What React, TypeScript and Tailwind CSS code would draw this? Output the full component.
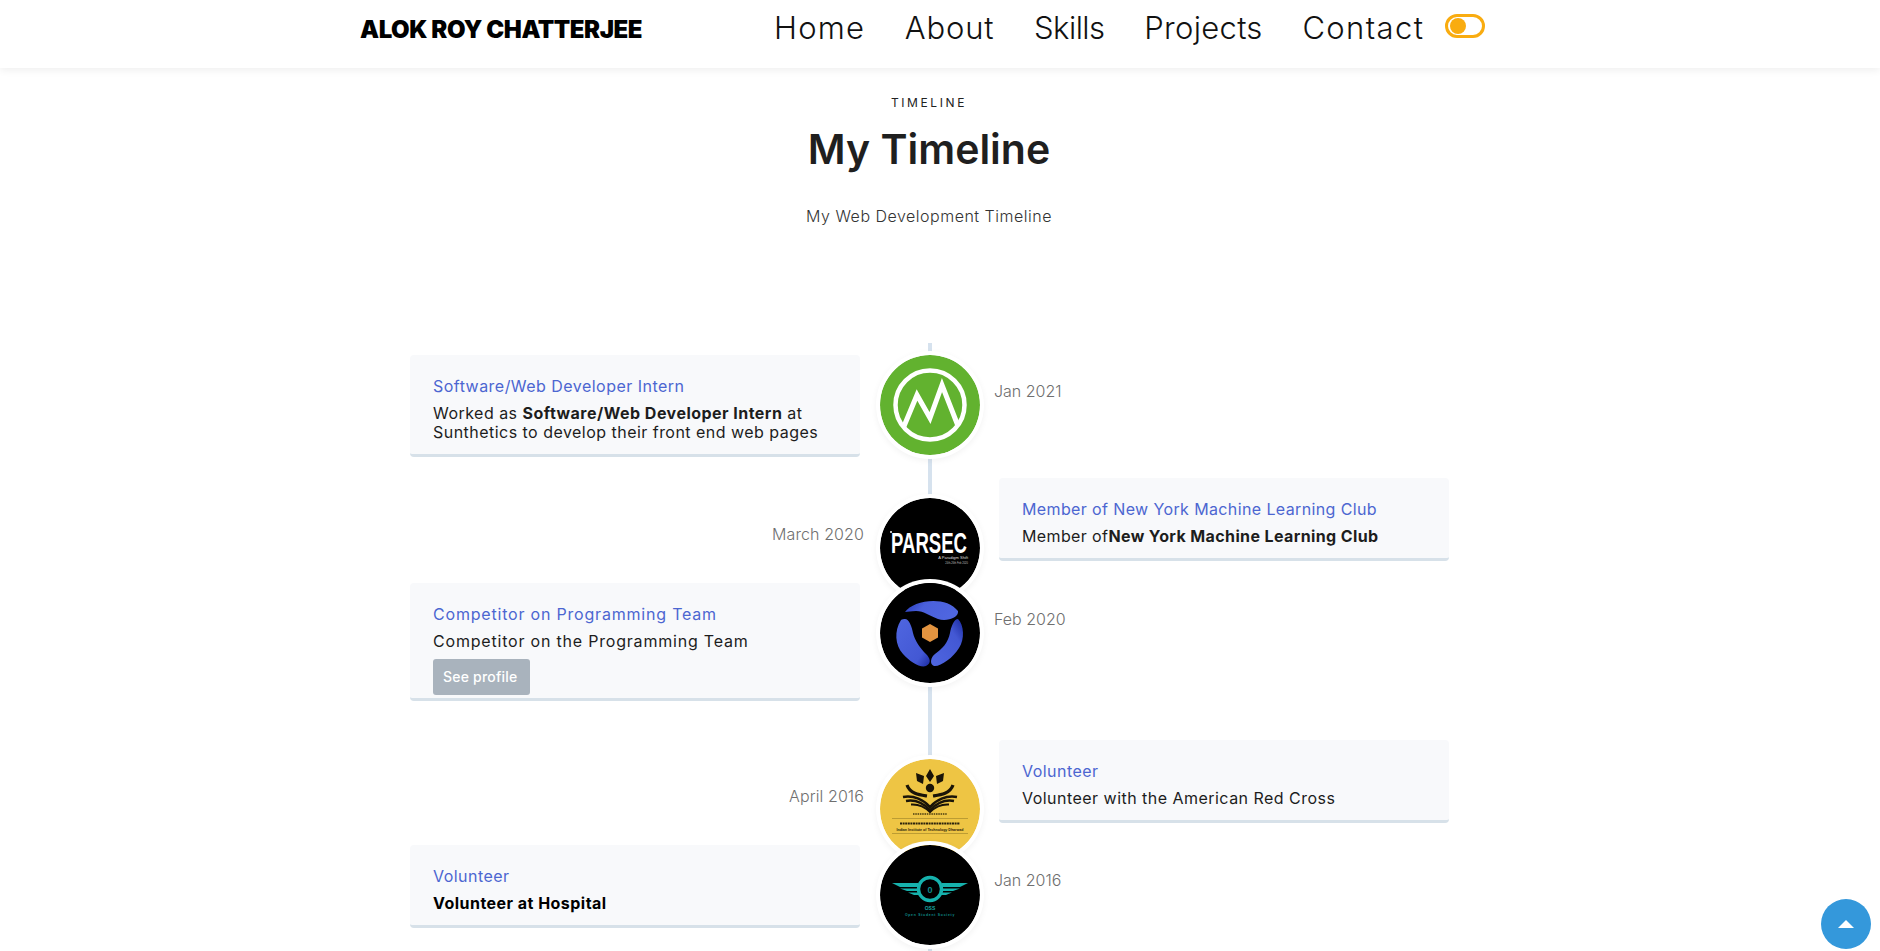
const font = "font-['Inter','Liberation_Sans',sans-serif]";

function GreenLogo() {
  return (
    <svg viewBox="0 0 100 100" className="w-full h-full">
      <defs>
        <clipPath id="ring">
          <circle cx="50" cy="50" r="35" />
        </clipPath>
      </defs>
      <circle cx="50" cy="50" r="50" fill="#62b22f" />
      <polyline points="22,76 37,40 50,63 62,30 80,76" fill="none" stroke="#fff" strokeWidth="5" clipPath="url(#ring)" />
      <circle cx="50" cy="50" r="34.5" fill="none" stroke="#fff" strokeWidth="4.5" />
    </svg>
  );
}

function ParsecLogo() {
  return (
    <svg viewBox="0 0 100 100" className="w-full h-full">
      <circle cx="50" cy="50" r="50" fill="#000" />
      <circle cx="11" cy="34" r="1" fill="#fff" />
      <text x="49" y="55" textAnchor="middle" fill="#fff" fontSize="29" fontFamily="Liberation Sans" fontWeight="700" textLength="76" lengthAdjust="spacingAndGlyphs">PARSEC</text>
      <text x="88" y="61" textAnchor="end" fill="#ddd" fontSize="4" fontFamily="Liberation Sans">A Paradigm Shift</text>
      <text x="88" y="66" textAnchor="end" fill="#bbb" fontSize="2.6" fontFamily="Liberation Sans">24th-26th Feb 2020</text>
    </svg>
  );
}

function BlueLogo() {
  return (
    <svg viewBox="0 0 100 100" className="w-full h-full">
      <defs>
        <linearGradient id="b1" x1="0" y1="0" x2="1" y2="0.3">
          <stop offset="0" stopColor="#2438b8" />
          <stop offset="0.4" stopColor="#4a60dc" />
          <stop offset="1" stopColor="#4f66e0" />
        </linearGradient>
        <linearGradient id="b2" x1="0" y1="0" x2="1" y2="1">
          <stop offset="0" stopColor="#4f66e0" />
          <stop offset="0.75" stopColor="#4358d4" />
          <stop offset="1" stopColor="#1a2aa0" />
        </linearGradient>
        <linearGradient id="b3" x1="1" y1="0" x2="0" y2="1">
          <stop offset="0" stopColor="#1a2aa0" />
          <stop offset="0.3" stopColor="#4358d4" />
          <stop offset="1" stopColor="#4f66e0" />
        </linearGradient>
      </defs>
      <circle cx="50" cy="50" r="50" fill="#000" />
      <path d="M25 29 C33 17 66 12 78 28 C79 35 66 39 58 36 C50 33 44 28 36 28 C31 28 28 29 25 29Z" fill="url(#b1)" />
      <path d="M21 37 C14 48 15 62 23 71 C30 79 40 85 46 83 C52 80 50 75 46 71 C40 65 35 58 33 50 C32 44 29 36 25 36 C24 36 22 36 21 37Z" fill="url(#b2)" />
      <path d="M78 36 C84 42 85 56 79 65 C73 75 60 84 54 83 C49 81 51 74 55 71 C62 66 68 60 70 50 C71 44 74 36 78 36Z" fill="url(#b3)" />
      <polygon points="50,41 58,45.5 58,54.5 50,59 42,54.5 42,45.5" fill="#e39440" />
    </svg>
  );
}

function BookLogo() {
  return (
    <svg viewBox="0 0 100 100" className="w-full h-full">
      <circle cx="50" cy="50" r="50" fill="#eec544" />
      <g transform="translate(0 1)">
        <path d="M50 9 L54 16 L50 22 L46 16Z M36 13 L44 16 L43 24 L37 21Z M64 13 L56 16 L57 24 L63 21Z" fill="#1a1408" />
        <circle cx="50" cy="28" r="4.2" fill="#1a1408" />
        <path d="M27 25 C30 34 40 35 47 36 M73 25 C70 34 60 35 53 36" fill="none" stroke="#1a1408" strokeWidth="3.2" />
        <path d="M23 37 C34 35 44 40 50 47 C56 40 66 35 77 37" fill="none" stroke="#1a1408" strokeWidth="2.6" />
        <path d="M26 41 C36 39 44 44 50 50 C56 44 64 39 74 41" fill="none" stroke="#1a1408" strokeWidth="2.4" />
        <path d="M31 44.5 C38 44 45 47 50 52 C55 47 62 44 69 44.5" fill="none" stroke="#1a1408" strokeWidth="2" />
        <line x1="33" y1="54" x2="67" y2="54" stroke="#4a3c10" strokeWidth="1.6" strokeDasharray="1.5 0.8" />
        <line x1="12" y1="58.5" x2="88" y2="58.5" stroke="#8a7222" strokeWidth="0.5" />
        <line x1="20" y1="63.5" x2="80" y2="63.5" stroke="#2b230c" strokeWidth="2.2" strokeDasharray="2 0.6" />
        <text x="50" y="71" textAnchor="middle" fontSize="3.6" fontWeight="700" fill="#2b230c" fontFamily="Liberation Sans">Indian Institute of Technology Dharwad</text>
        <line x1="12" y1="73.5" x2="88" y2="73.5" stroke="#8a7222" strokeWidth="0.5" />
      </g>
    </svg>
  );
}

function OssLogo() {
  return (
    <svg viewBox="0 0 100 100" className="w-full h-full">
      <circle cx="50" cy="50" r="50" fill="#000" />
      <circle cx="50" cy="44" r="11.5" fill="none" stroke="#16b2ad" strokeWidth="3.4" />
      <path d="M12 38 H38 V42 H20Z M20 43.5 H37 V46 H27Z M28 47.5 H39 V50 H34Z M88 38 H62 V42 H80Z M80 43.5 H63 V46 H73Z M72 47.5 H61 V50 H66Z" fill="#16b2ad" />
      <text x="50" y="48" textAnchor="middle" fontSize="9" fontWeight="700" fill="#0f8f8c" fontFamily="Liberation Sans">0</text>
      <text x="50" y="64.5" textAnchor="middle" fontSize="5" fontWeight="700" fill="#16a5a1" fontFamily="Liberation Sans">OSS</text>
      <text x="50" y="71" textAnchor="middle" fontSize="3.4" fontWeight="700" letterSpacing="0.75" fill="#0f8f8c" fontFamily="Liberation Sans">Open Student Society</text>
    </svg>
  );
}

function Card({ title, spacing, children }: { title: string; spacing: string; children: React.ReactNode }) {
  return (
    <div className={`w-[450px] bg-[#f8f9fb] rounded-[4px] border-b-[3px] border-[#d7e1e9] pl-[23px] pr-[20px] pt-[20px] pb-[12px] ${spacing}`}>
      <h3 className="text-[16px] leading-[22px] text-[#4c66d1]">{title}</h3>
      <div className="mt-[7px] text-[16px] leading-[19px] text-[#1d1d1d]">{children}</div>
    </div>
  );
}

const rows = [
  {
    h: "h-[123px]", side: "left", date: "Jan 2021", title: "Software/Web Developer Intern", spacing: "tracking-[0.47px]", circleTop: "mt-0", dateTop: "mt-[24px]", logo: <GreenLogo />,
    body: <>Worked as <b className="font-bold">Software/Web Developer Intern</b> at Sunthetics to develop their front end web pages</>,
  },
  {
    h: "h-[105px]", side: "right", date: "March 2020", title: "Member of New York Machine Learning Club", spacing: "tracking-[0.38px]", circleTop: "mt-[20px]", dateTop: "mt-[44px]", logo: <ParsecLogo />,
    body: <>Member of<b className="font-bold">New York Machine Learning Club</b></>,
  },
  {
    h: "h-[157px]", side: "left", date: "Feb 2020", title: "Competitor on Programming Team", spacing: "tracking-[0.8px]", circleTop: "mt-0", dateTop: "mt-[24px]", logo: <BlueLogo />,
    body: <>Competitor on the Programming Team<a className="block mt-[8px] -mb-[9px] w-[97px] h-[36px] leading-[36px] pl-[10px] bg-[#a9b3bd] text-white text-[14px] tracking-[0.2px] font-medium rounded-[3px]">See profile</a></>,
  },
  {
    h: "h-[105px]", side: "right", date: "April 2016", title: "Volunteer", spacing: "tracking-[0.47px]", circleTop: "mt-[19px]", dateTop: "mt-[44px]", logo: <BookLogo />,
    body: <>Volunteer with the American Red Cross</>,
  },
  {
    h: "h-[106px]", side: "left", date: "Jan 2016", title: "Volunteer", spacing: "tracking-[0.47px]", circleTop: "mt-0", dateTop: "mt-[23px]", logo: <OssLogo />,
    body: <b className="font-bold text-black">Volunteer at Hospital</b>,
  },
];

export default function App() {
  return (
    <div className={`${font} bg-white h-screen overflow-hidden`}>
      <header className="h-[68px] bg-white shadow-[0_2px_8px_rgba(0,0,0,0.07)] flex items-center pl-[360px]">
        <div className="w-[414px] -mt-[8px] text-[24px] font-black text-black tracking-[-0.45px]">ALOK ROY CHATTERJEE</div>
        <nav className="flex items-center gap-[39.7px] -mt-[12px] text-[31px] font-light text-[#111]">
          <a className="tracking-[1.2px]">Home</a>
          <a className="tracking-[0.8px]">About</a>
          <a className="tracking-[-0.5px]">Skills</a>
          <a className="tracking-[0.3px]">Projects</a>
          <a className="tracking-[1.4px]">Contact</a>
        </nav>
        <div className="ml-[21px] -mt-[16px] w-[40px] h-[24px] rounded-full border-[3px] border-[#f9ac10] flex items-center pl-[2px]">
          <div className="w-[16px] h-[16px] rounded-full bg-[#f9ac10]" />
        </div>
      </header>

      <section className="w-[1858px] flex flex-col items-center">
        <p className="mt-[27px] text-[12px] leading-[16px] tracking-[2.6px] font-normal text-[#222]">TIMELINE</p>
        <h2 className="mt-[8px] text-[41px] leading-[60px] font-semibold text-[#1f1f1f]">My Timeline</h2>
        <p className="mt-[25px] text-[16px] leading-[24px] font-light tracking-[0.5px] text-[#333]">My Web Development Timeline</p>
      </section>

      <div className="relative w-[1039px] ml-[410px] mt-[115px] pt-[12px]">
        <div className="absolute left-[518px] top-0 bottom-0 w-[4px] bg-[#d6e2ee]" />
        {rows.map((r) => (
          <div key={r.date} className={`relative ${r.h} flex items-start`}>
            <div className="w-[450px] shrink-0 flex justify-end">
              {r.side === "left" ? (
                <Card title={r.title} spacing={r.spacing}>{r.body}</Card>
              ) : (
                <span className={`${r.dateTop} mr-[-4px] text-[16px] leading-[24px] font-light tracking-[0.1px] text-[#6f6f6f]`}>{r.date}</span>
              )}
            </div>
            <div className={`w-[100px] h-[100px] mx-[20px] shrink-0 ${r.circleTop} rounded-full shadow-[0_0_0_4px_#fff,0_2px_6px_4px_rgba(0,0,0,0.05)] overflow-hidden`}>
              {r.logo}
            </div>
            <div className="w-[449px] shrink-0 ml-[-1px]">
              {r.side === "right" ? (
                <Card title={r.title} spacing={r.spacing}>{r.body}</Card>
              ) : (
                <span className={`block ${r.dateTop} ml-[-5px] text-[16px] leading-[24px] font-light text-[#6f6f6f]`}>{r.date}</span>
              )}
            </div>
          </div>
        ))}
      </div>

      <button className="fixed right-[9px] bottom-[2px] w-[50px] h-[50px] rounded-full bg-[#3498db] flex items-center justify-center">
        <span className="w-0 h-0 border-x-[8px] border-x-transparent border-b-[8px] border-b-white" />
      </button>
    </div>
  );
}
